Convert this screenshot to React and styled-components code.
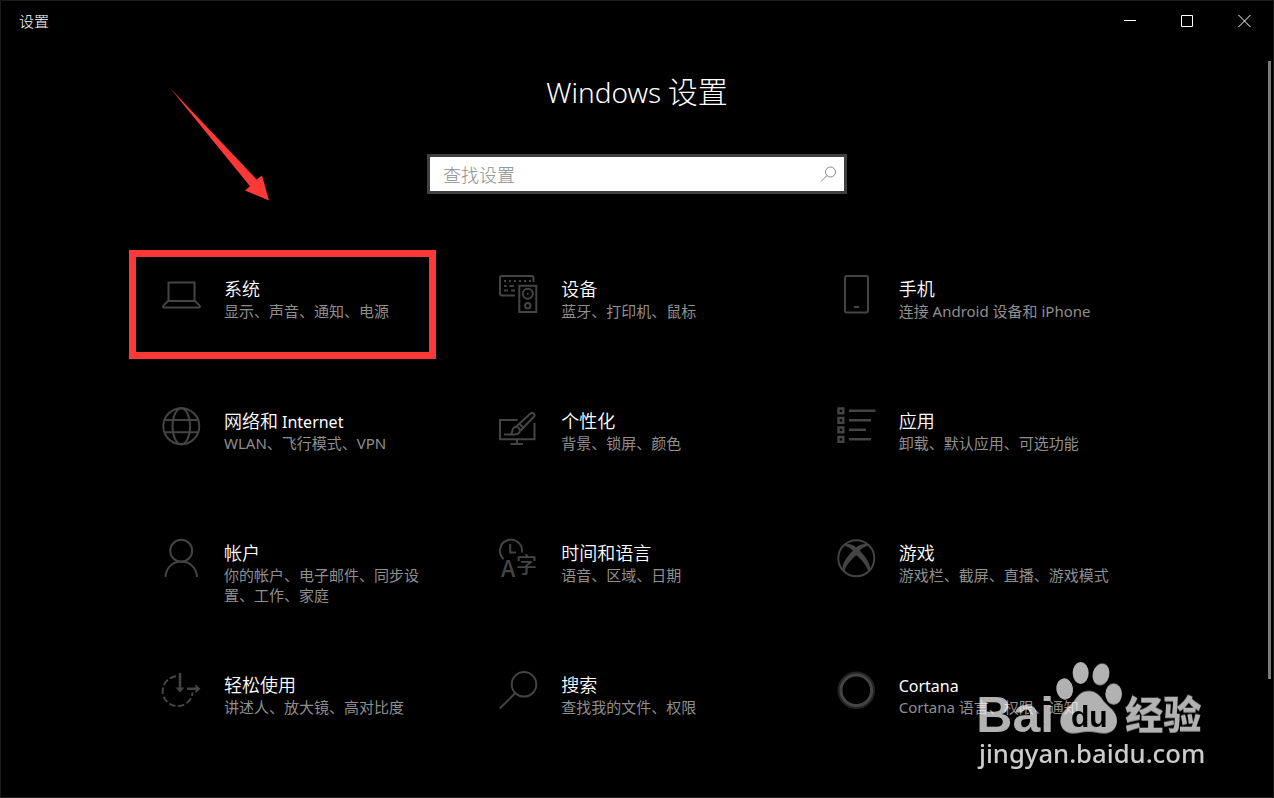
import React from 'react'
import styled, { createGlobalStyle } from 'styled-components';

const GlobalStyle = createGlobalStyle`
  * {
    box-sizing: border-box;
  }
  body {
    margin: 0;
    background: #000;
    color: #fff;
    font-family: 'Noto Sans CJK SC', sans-serif;
    font-weight: 300;
  }
`;

const Window = styled.div`
  position: relative;
  min-height: 100vh;
  padding-bottom: 20px;
  border: 1px solid #1a1a1a;
  overflow: hidden;
`;

const TitleBar = styled.header`
  display: flex;
  align-items: center;
  justify-content: space-between;
  height: 38px;
  padding-left: 18px;
  font-size: 15px;
`;

const Controls = styled.div`
  display: flex;
  height: 100%;
`;

const ControlButton = styled.button`
  display: flex;
  align-items: center;
  justify-content: center;
  width: 57px;
  padding: 0;
  border: 0;
  background: transparent;
  color: #fff;
  &:hover {
    background: ${({ $danger }) => ($danger ? '#e81123' : '#222')};
  }
`;

const Heading = styled.h1`
  margin: 29px 0 0;
  font-size: 30px;
  line-height: 44px;
  font-weight: 300;
  text-align: center;
`;

const Latin = styled.span`
  font-family: 'Noto Sans', sans-serif;
  font-size: ${({ $size }) => $size}px;
  font-weight: ${({ $weight }) => $weight};
  line-height: 1;
`;

const SearchBox = styled.label`
  display: flex;
  align-items: center;
  width: 420px;
  max-width: 90%;
  height: 40px;
  margin: 42px auto 0;
  padding: 0 7px 0 13px;
  border: 3px solid #404040;
  background: #fff;
  color: #8a8a8a;
`;

const SearchInput = styled.input`
  flex: 1;
  min-width: 0;
  padding: 0;
  border: 0;
  outline: 0;
  background: transparent;
  color: #000;
  font: inherit;
  font-size: 18px;
  line-height: 26px;
  &::placeholder {
    color: #8c8c8c;
    opacity: 1;
  }
`;

const Grid = styled.main`
  display: grid;
  grid-template-columns: repeat(auto-fit, minmax(300px, 1fr));
  row-gap: 24px;
  max-width: 1012px;
  margin: 56px auto 0;
`;

const Tile = styled.a`
  position: relative;
  display: flex;
  gap: 23px;
  min-height: 108px;
  padding: 25px 28px 0 31px;
  color: #fff;
  text-decoration: none;
`;

const TileIcon = styled.svg`
  flex: none;
  width: 39px;
  height: 39px;
  overflow: visible;
  fill: none;
  stroke: #444;
  stroke-width: 2;
`;

const TileName = styled.div`
  font-size: 18px;
  line-height: 26px;
  font-weight: 350;
`;

const TileInfo = styled.div`
  color: #8f8f8f;
  font-family: 'Noto Sans', 'Noto Sans CJK SC', sans-serif;
  font-size: 15px;
  line-height: 20px;
  font-weight: 400;
`;

const Highlight = styled.span`
  position: absolute;
  top: 0;
  left: -2px;
  width: 307px;
  height: 109px;
  border: 7px solid #fc3838;
  pointer-events: none;
`;

const Arrow = styled.svg`
  position: absolute;
  left: 38px;
  top: -163px;
  width: 102px;
  height: 116px;
  fill: #fc3838;
  pointer-events: none;
`;

const Scrollbar = styled.div`
  position: absolute;
  top: 60px;
  right: 2px;
  bottom: 118px;
  width: 3px;
  background: #7a7a7a;
`;

const Watermark = styled.svg`
  position: absolute;
  right: 62px;
  bottom: 24px;
  width: 234px;
  height: 114px;
  overflow: visible;
  fill: #fff;
  pointer-events: none;
`;

const icons = {
  system: (
    <>
      <path d="M6.5 26V7.5h26V26" />
      <path d="M6 26h27l4.6 4.6c.8.9.4 1.9-.8 1.9H2.2c-1.2 0-1.6-1-.8-1.9z" />
    </>
  ),
  devices: (
    <>
      <path d="M16 20.500H3a2 2 0 0 1-2-2V3a2 2 0 0 1 2-2h29.500a2 2 0 0 1 2 2v4" />
      <path d="M5 6h2m3 0h2m3 0h2m3 0h2m3 0h2m3 0h2M5 11h2.500m3 0H15M5 15.500h4m3 0h4" />
      <path d="M20.300 10.700h17v26.300h-17z" />
      <circle cx="28.800" cy="18.700" r="5" />
      <circle cx="28.800" cy="18.700" r="1" fill="#444" stroke="none" />
      <circle cx="28.800" cy="30.700" r="2.700" />
    </>
  ),
  phone: (
    <>
      <rect x="8" y="1" width="23" height="36.500" rx="2" />
      <path d="M17 32h5" />
    </>
  ),
  network: (
    <>
      <circle cx="19.300" cy="19.300" r="18" />
      <ellipse cx="19.300" cy="19.300" rx="8.800" ry="18" />
      <path d="M2.500 13h33.600M2.500 25.300h33.600" />
    </>
  ),
  personalization: (
    <>
      <path d="M18.500 13H1v19.300h34.500V16M18 32v5M11.500 37h12.500" />
      <path d="M17 19.800 31.500 6.600a2.300 2.300 0 0 1 3.300 3.200L21.200 24M20.300 16.800l3.900 4" />
      <path d="M5 27.500h9.500c3.800.4 6.500-1.500 6.400-4.200-.1-2.600-3.100-4.500-5.600-3-3 1.900-1 5.200-3.700 7.200" />
    </>
  ),
  apps: [38.5, 34, 29, 34].map((end, i) => (
    <g key={i} transform={`translate(0 ${i * 9.5})`}>
      <path d={`M1.500 1.500H6.300V6.300H1.500zM12 3.800H${end}`} strokeWidth="2.400" />
    </g>
  )),
  accounts: (
    <>
      <circle cx="19.200" cy="11.800" r="11" />
      <path d="M3.500 38c.4-9 7-15.500 15.700-15.500S34.500 29 35 38" />
    </>
  ),
  time: (
    <>
      <path d="M4.800 20A11 11 0 1 1 22.800 13.500M11.200 5v8.500H17" />
      <g fill="#444" stroke="none">
        <text x="2" y="38" fontSize="23" fontWeight="500" fontFamily="Noto Sans CJK SC">A</text>
        <text x="17" y="33" fontSize="21" fontWeight="500" fontFamily="Noto Sans CJK SC">字</text>
      </g>
    </>
  ),
  gaming: (
    <>
      <circle cx="19.300" cy="19.300" r="18" />
      <path
        fill="#444"
        stroke="none"
        d="M8.500 5.300c3.600-1.300 8 .9 10.800 2.900 2.800-2 7.200-4.200 10.800-2.900l2 1.900c-3-.7-6.600 1.700-9.300 4.500 5.200 5.200 11.200 13 10.200 19l-1.700 1.800c-1.100-5.500-6.500-11.500-12-16.300-5.500 4.800-10.900 10.800-12 16.300l-1.700-1.800c-1-6 5-13.800 10.200-19C13.100 8.900 9.500 6.500 6.500 7.200z"
      />
    </>
  ),
  ease: (
    <>
      <path d="M14 5.200a15 15 0 1 0 16.600 16.300" strokeDasharray="6.500 2.600" />
      <path d="M18 2v15M25 17.800h9" strokeWidth="2.500" />
      <path d="M13.500 16.500h9L18 21.500zM33.500 13.300v9l5-4.500z" fill="#444" stroke="none" />
    </>
  ),
  search: (
    <>
      <circle cx="25" cy="13.300" r="12.300" />
      <path d="M16.300 22 .8 37.500" />
    </>
  ),
  cortana: (
    <>
      <circle cx="19.300" cy="19.300" r="17.300" stroke="#222" strokeWidth="3" />
      <circle cx="19.300" cy="19.300" r="15.300" strokeWidth="3" />
    </>
  ),
};

const categories = [
  { icon: 'system', name: '系统', info: '显示、声音、通知、电源', marked: true },
  { icon: 'devices', name: '设备', info: '蓝牙、打印机、鼠标' },
  { icon: 'phone', name: '手机', info: '连接 Android 设备和 iPhone' },
  { icon: 'network', name: '网络和 ', latin: 'Internet', info: 'WLAN、飞行模式、VPN' },
  { icon: 'personalization', name: '个性化', info: '背景、锁屏、颜色' },
  { icon: 'apps', name: '应用', info: '卸载、默认应用、可选功能' },
  { icon: 'accounts', name: '帐户', info: '你的帐户、电子邮件、同步设置、工作、家庭' },
  { icon: 'time', name: '时间和语言', info: '语音、区域、日期' },
  { icon: 'gaming', name: '游戏', info: '游戏栏、截屏、直播、游戏模式' },
  { icon: 'ease', name: '轻松使用', info: '讲述人、放大镜、高对比度' },
  { icon: 'search', name: '搜索', info: '查找我的文件、权限' },
  { icon: 'cortana', latin: 'Cortana', info: 'Cortana 语言、权限、通知' },
];

const ControlIcon = ({ d }) => (
  <svg width="13" height="13" viewBox="0 0 13 13" fill="none" stroke="currentColor">
    <path d={d} />
  </svg>
);

const Category = ({ icon, name, latin, info, marked }) => (
  <Tile href={`#${icon}`}>
    <TileIcon viewBox="0 0 39 39" aria-hidden="true">{icons[icon]}</TileIcon>
    <div>
      <TileName>
        {name}
        {latin && <Latin $size={16} $weight={400}>{latin}</Latin>}
      </TileName>
      <TileInfo>{info}</TileInfo>
    </div>
    {marked && (
      <>
        <Highlight />
        <Arrow viewBox="0 0 102 116" aria-hidden="true">
          <path d="M1 1 87.700 92.500 93 88.500 100 113.500 76 103.500 81 99.200z" />
        </Arrow>
      </>
    )}
  </Tile>
);

const BaiduMark = () => (
  <Watermark viewBox="470 30 702 342">
    <g opacity="0.7">
      <text x="468" y="248" fontSize="150" fontWeight="700" fontFamily="Liberation Sans">Bai</text>
      <ellipse cx="781" cy="72" rx="24" ry="33" />
      <ellipse cx="842" cy="76" rx="25" ry="33" transform="rotate(14 842 76)" />
      <ellipse cx="733" cy="120" rx="25" ry="32" transform="rotate(-8 733 120)" />
      <ellipse cx="880" cy="135" rx="25" ry="32" />
      <path d="M805 126c22 0 34 14 44 29 12 17 41 30 41 60 0 24-16 38-38 38-18 0-30-5-47-5s-30 5-47 5c-22 0-38-14-38-38 0-30 30-43 42-60 10-15 21-29 43-29z" />
      <text x="914" y="238" fontSize="115" fontWeight="900" fontFamily="Noto Sans CJK SC">经验</text>
    </g>
    <text x="752" y="234" fontSize="90" fontWeight="700" fontFamily="Liberation Sans" fill="#000">du</text>
    <text x="476" y="343" fontSize="77" fontWeight="500" fontFamily="Noto Sans" opacity="0.8">jingyan.baidu.com</text>
  </Watermark>
);

export default function App() {
  return (
    <Window>
      <GlobalStyle />
      <TitleBar>
        <span>设置</span>
        <Controls>
          <ControlButton aria-label="最小化"><ControlIcon d="M0 6.500h12" /></ControlButton>
          <ControlButton aria-label="最大化"><ControlIcon d="M.5 1.500h11v11H.5z" /></ControlButton>
          <ControlButton aria-label="关闭" $danger><ControlIcon d="M.5 1l12 12M12.500 1l-12 12" /></ControlButton>
        </Controls>
      </TitleBar>
      <Heading><Latin $size={28} $weight={300}>Windows</Latin> 设置</Heading>
      <SearchBox>
        <SearchInput type="text" placeholder="查找设置" aria-label="查找设置" />
        <svg width="17" height="17" viewBox="0 0 17 17" fill="none" stroke="currentColor">
          <circle cx="10.500" cy="6" r="5" />
          <path d="M7 9.500 1 15.500" />
        </svg>
      </SearchBox>
      <Grid>
        {categories.map((item) => (
          <Category key={item.icon} {...item} />
        ))}
      </Grid>
      <Scrollbar />
      <BaiduMark />
    </Window>
  )
}
